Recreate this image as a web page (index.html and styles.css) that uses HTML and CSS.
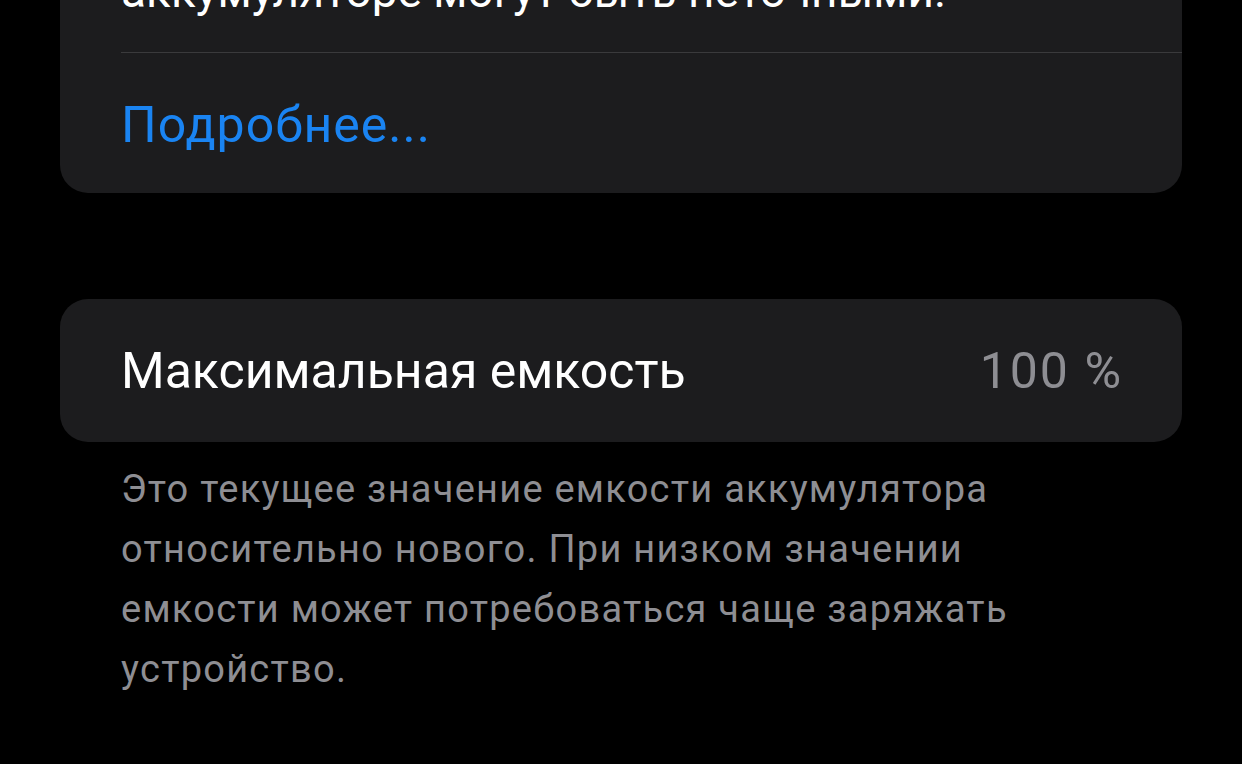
FILE: index.html
```html
<!DOCTYPE html>
<html lang="ru">
<head>
<meta charset="utf-8">
<link rel="stylesheet" href="styles.css">
</head>
<body>
<main class="page">
  <section class="card card-info">
    <p class="card-text">аккумуляторе могут быть неточными.</p>
    <div class="sep"></div>
    <div class="link-row"><a class="link">Подробнее...</a></div>
  </section>

  <section class="card card-capacity">
    <span class="label">Максимальная емкость</span>
    <span class="value">100 %</span>
  </section>
  <p class="footer">Это текущее значение емкости аккумулятора относительно нового. При низком значении емкости может потребоваться чаще заряжать устройство.</p>
</main>
</body>
</html>
```
FILE: styles.css
```css
html, body {
  margin: 0;
  padding: 0;
  background: #000;
  height: 100%;
  overflow: hidden;
}
.page {
  padding: 0 60px;
  font-family: Roboto, "Liberation Sans", sans-serif;
}
.card {
  background: #1c1c1e;
  border-radius: 28px;
}
.card-info {
  margin-top: -60px;
  padding-left: 61px;
}
.card-text {
  margin: 0;
  padding: 21px 60px 31px 0;
  font-size: 46px;
  line-height: 60px;
  color: #fff;
  white-space: nowrap;
  overflow: hidden;
}
.sep {
  height: 1px;
  background: #3a3a3c;
}
.link-row {
  height: 140px;
  display: flex;
  align-items: center;
  padding-top: 3px;
  box-sizing: border-box;
}
.link {
  color: #1a84f2;
  font-size: 50px;
  letter-spacing: 1px;
}
.card-capacity {
  margin-top: 106px;
  height: 143px;
  display: flex;
  align-items: center;
  justify-content: space-between;
  padding: 0 61px;
  font-size: 50px;
}
.label {
  color: #fff;
}
.value {
  color: #8e8e93;
  letter-spacing: 2px;
  margin-right: -2px;
}
.footer {
  margin: 0;
  padding: 17px 100px 0 61px;
  font-size: 38px;
  line-height: 60px;
  letter-spacing: 1.25px;
  color: #8e8e93;
}
```
